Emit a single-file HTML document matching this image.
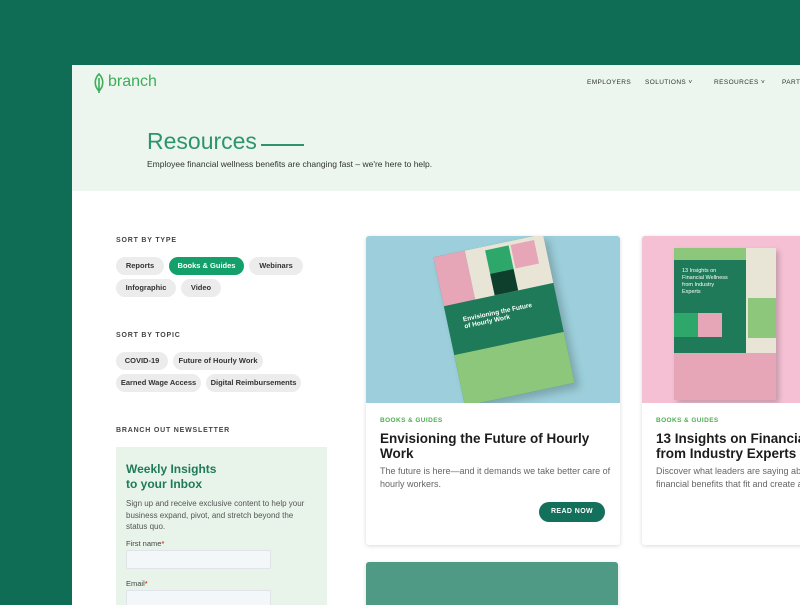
<!DOCTYPE html>
<html><head><meta charset="utf-8"><style>
*{margin:0;padding:0;box-sizing:border-box}
body{width:800px;height:600px;overflow:hidden;background:#0f6d56;font-family:"Liberation Sans",sans-serif;position:relative}
.page{position:absolute;left:72px;top:65px;width:740px;height:540px;background:#fff;overflow:hidden}
.hero{position:absolute;left:0;top:0;width:740px;height:126px;background:#ecf6ee}
.abs{position:absolute}
.nav{font-size:6.5px;color:#333;letter-spacing:.4px;top:14px;line-height:8px}
.lbl{font-size:7px;font-weight:bold;color:#444;letter-spacing:.8px}
.pill{position:absolute;height:18px;border-radius:9px;background:#ececec;font-size:7.5px;font-weight:bold;color:#333;line-height:18px;text-align:center}
.card{position:absolute;background:#fff;box-shadow:0 1px 4px rgba(0,0,0,.15);border-radius:3px;overflow:hidden}
.cat{font-size:6.5px;font-weight:bold;color:#4caf50;letter-spacing:.4px}
.ttl{font-size:13.5px;font-weight:bold;color:#1c1c1c;line-height:15px}
.desc{font-size:9px;color:#666;line-height:13px}
</style></head><body>
<div class="page">
<div class="hero"></div>
<svg class="abs" style="left:20px;top:7px" width="14" height="22" viewBox="0 0 14 22"><path d="M7 2C2 7 2 14 7 19C12 14 12 7 7 2Z M7 6V21" fill="none" stroke="#3cae5a" stroke-width="1.6"/></svg>
<div class="abs" style="left:36px;top:8px;font-size:16px;color:#3cae5a">branch</div>
<div class="abs nav" style="left:515px">EMPLOYERS</div>
<div class="abs nav" style="left:573px">SOLUTIONS &#709;</div>
<div class="abs nav" style="left:642px">RESOURCES &#709;</div>
<div class="abs nav" style="left:710px">PARTNERS</div>
<div class="abs" style="left:75px;top:63px;font-size:23px;color:#2e9470">Resources</div>
<div class="abs" style="left:189px;top:79px;width:43px;height:2px;background:#2e9470"></div>
<div class="abs" style="left:75px;top:94px;font-size:8.5px;color:#333">Employee financial wellness benefits are changing fast – we're here to help.</div>

<div class="abs lbl" style="left:44px;top:172px">SORT BY TYPE</div>
<div class="pill" style="left:44px;top:192px;width:48px">Reports</div>
<div class="pill" style="left:97px;top:192px;width:75px;background:#14a06a;color:#fff">Books &amp; Guides</div>
<div class="pill" style="left:177px;top:192px;width:54px">Webinars</div>
<div class="pill" style="left:44px;top:214px;width:60px">Infographic</div>
<div class="pill" style="left:109px;top:214px;width:40px">Video</div>
<div class="abs lbl" style="left:44px;top:267px">SORT BY TOPIC</div>
<div class="pill" style="left:44px;top:287px;width:52px">COVID-19</div>
<div class="pill" style="left:101px;top:287px;width:90px">Future of Hourly Work</div>
<div class="pill" style="left:44px;top:309px;width:85px">Earned Wage Access</div>
<div class="pill" style="left:134px;top:309px;width:95px">Digital Reimbursements</div>
<div class="abs lbl" style="left:44px;top:362px">BRANCH OUT NEWSLETTER</div>
<div class="abs" style="left:44px;top:382px;width:211px;height:170px;background:#e8f4e9"></div>
<div class="abs" style="left:54px;top:397px;font-size:12px;font-weight:bold;color:#1e7a58;line-height:15px">Weekly Insights<br>to your Inbox</div>
<div class="abs" style="left:54px;top:433px;width:190px;font-size:8px;color:#555;line-height:11.5px">Sign up and receive exclusive content to help your business expand, pivot, and stretch beyond the status quo.</div>
<div class="abs" style="left:54px;top:474px;font-size:7.5px;color:#444">First name<span style="color:#c00">*</span></div>
<div class="abs" style="left:54px;top:485px;width:145px;height:19px;background:#f4f7fa;border:1px solid #e0e4e8;border-radius:2px"></div>
<div class="abs" style="left:54px;top:514px;font-size:7.5px;color:#444">Email<span style="color:#c00">*</span></div>
<div class="abs" style="left:54px;top:525px;width:145px;height:19px;background:#f4f7fa;border:1px solid #e0e4e8;border-radius:2px"></div>

<div class="card" style="left:294px;top:171px;width:254px;height:309px">
 <div style="height:167px;background:#9ccfdb;position:relative;overflow:hidden">
  <div style="position:absolute;left:82px;top:8px;width:112px;height:152px;background:#1e7a58;transform:rotate(-12deg);box-shadow:4px 6px 8px rgba(0,0,0,.2)">
   <div style="position:absolute;left:0;top:0;width:32px;height:50px;background:#e7a6b8"></div>
   <div style="position:absolute;left:32px;top:0;width:80px;height:50px;background:#e8e4d6"></div>
   <div style="position:absolute;left:52px;top:4px;width:24px;height:24px;background:#2ea86a"></div>
   <div style="position:absolute;left:78px;top:4px;width:24px;height:24px;background:#e7a6b8"></div>
   <div style="position:absolute;left:52px;top:28px;width:24px;height:22px;background:#0d3f2c"></div>
   <div style="position:absolute;left:0;top:100px;width:112px;height:52px;background:#8dc77b"></div>
   <div style="position:absolute;left:16px;top:64px;font-size:6.5px;color:#fff;font-weight:bold">Envisioning the Future<br>of Hourly Work</div>
  </div>
 </div>
 <div class="abs cat" style="left:14px;top:181px">BOOKS &amp; GUIDES</div>
 <div class="abs ttl" style="left:14px;top:195px;width:230px">Envisioning the Future of Hourly Work</div>
 <div class="abs desc" style="left:14px;top:229px;width:235px">The future is here—and it demands we take better care of hourly workers.</div>
 <div class="abs" style="left:173px;top:266px;width:66px;height:20px;border-radius:10px;background:#13705a;color:#fff;font-size:7px;font-weight:bold;text-align:center;line-height:20px;letter-spacing:.4px">READ NOW</div>
</div>

<div class="card" style="left:570px;top:171px;width:200px;height:309px">
 <div style="height:167px;background:#f5c0d4;position:relative;overflow:hidden">
  <div style="position:absolute;left:32px;top:12px;width:102px;height:152px;background:#1e7a58;box-shadow:3px 3px 5px rgba(0,0,0,.2)">
   <div style="position:absolute;left:0;top:0;width:102px;height:12px;background:#8dc77b"></div>
   <div style="position:absolute;left:72px;top:0;width:30px;height:152px;background:#e8e4d6"></div>
   <div style="position:absolute;left:0;top:105px;width:102px;height:47px;background:#e7a6b8"></div>
   <div style="position:absolute;left:74px;top:50px;width:28px;height:40px;background:#8dc77b"></div>
   <div style="position:absolute;left:0;top:65px;width:24px;height:24px;background:#2ea86a"></div>
   <div style="position:absolute;left:24px;top:65px;width:24px;height:24px;background:#e7a6b8"></div>
   <div style="position:absolute;left:8px;top:20px;font-size:5.5px;color:#fff;line-height:7px">13 Insights on<br>Financial Wellness<br>from Industry<br>Experts</div>
  </div>
 </div>
 <div class="abs cat" style="left:14px;top:181px">BOOKS &amp; GUIDES</div>
 <div class="abs ttl" style="left:14px;top:195px;width:260px;white-space:nowrap">13 Insights on Financial Wellness<br>from Industry Experts</div>
 <div class="abs desc" style="left:14px;top:229px;width:300px;white-space:nowrap">Discover what leaders are saying about<br>financial benefits that fit and create a</div>
</div>

<div class="card" style="left:294px;top:497px;width:252px;height:60px;background:#4f9a84"></div>
</div>
</body></html>
